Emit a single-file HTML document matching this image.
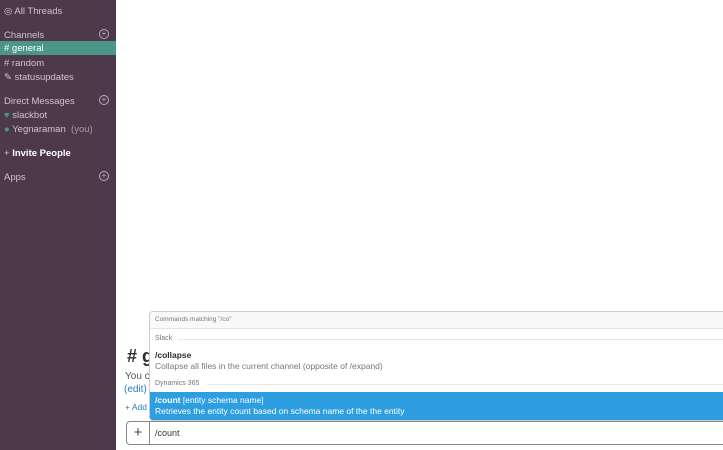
<!DOCTYPE html>
<html><head><style>
body{margin:0;width:723px;height:450px;overflow:hidden;font-family:"Liberation Sans",sans-serif;background:#fff;position:relative}
.sb{position:absolute;left:0;top:0;width:116px;height:450px;background:#4d394b;color:#cfc3cf;font-size:9.5px}
.sb div{position:absolute;left:4px;white-space:nowrap}
.plus{position:absolute;left:99px!important;width:8px;height:8px;border:1px solid #b9aab8;border-radius:50%;font-size:8px;line-height:8px;text-align:center;color:#b9aab8}
.a{position:absolute;white-space:nowrap}
</style></head><body>
<div class="sb">
<div style="top:6px">◎ All Threads</div>
<div style="top:30px">Channels</div><div class="plus" style="top:29px">+</div>
<div style="left:0!important;top:41px;width:116px;height:14px;background:#4c9689"></div>
<div style="top:43px;color:#fff"># general</div>
<div style="top:58px"># random</div>
<div style="top:72px">✎ statusupdates</div>
<div style="top:96px">Direct Messages</div><div class="plus" style="top:95px">+</div>
<div style="top:110px"><span style="color:#4c9689">♥</span> slackbot</div>
<div style="top:124px"><span style="color:#4c9689">●</span> Yegnaraman <span style="color:#a897a6">&nbsp;(you)</span></div>
<div style="top:148px;color:#fff;font-weight:bold"><span style="font-weight:normal;color:#cfc3cf">+</span> Invite People</div>
<div style="top:172px">Apps</div><div class="plus" style="top:171px">+</div>
</div>
<div class="a" style="left:127px;top:346px;font-size:18px;font-weight:bold;color:#2c2d30"># g</div>
<div class="a" style="left:125px;top:371px;font-size:10px;color:#555">You c</div>
<div class="a" style="left:124px;top:384px;font-size:10px;color:#2a80b9">(edit)</div>
<div class="a" style="left:125px;top:402px;font-size:8.5px;color:#2a80b9">+ Add</div>
<div class="a" style="left:149px;top:311px;width:580px;height:110px;border:1px solid #ccc;border-radius:4px;background:#fff;box-sizing:border-box;overflow:hidden">
<div style="height:17px;background:#f9f9f9;border-bottom:1px solid #e4e4e4;font-size:6.5px;color:#777;padding:4px 0 0 5px;box-sizing:border-box">Commands matching "/co"</div>
<div style="position:absolute;left:5px;top:23px;font-size:7px;color:#777">Slack</div>
<div style="position:absolute;left:28px;top:27px;width:560px;border-top:1px solid #e8e8e8"></div>
<div style="position:absolute;left:5px;top:38px;font-size:8.5px;font-weight:bold;color:#2c2d30">/collapse</div>
<div style="position:absolute;left:5px;top:49px;font-size:8.5px;color:#777">Collapse all files in the current channel (opposite of /expand)</div>
<div style="position:absolute;left:5px;top:68px;font-size:7px;color:#777">Dynamics 365</div>
<div style="position:absolute;left:57px;top:72px;width:560px;border-top:1px solid #e8e8e8"></div>
<div style="position:absolute;left:0;top:80px;width:580px;height:28px;background:#2d9ee0;color:#fff;font-size:8.5px">
<div style="position:absolute;left:5px;top:3px"><b>/count</b> [entity schema name]</div>
<div style="position:absolute;left:5px;top:14px">Retrieves the entity count based on schema name of the the entity</div></div>
</div>
<div class="a" style="left:126px;top:421px;width:610px;height:24px;border:1px solid #888;border-radius:4px;box-sizing:border-box">
<div style="position:absolute;left:0;top:0;width:22px;height:22px;border-right:1px solid #888;text-align:center;font-size:15px;line-height:21px;color:#444">+</div>
<div style="position:absolute;left:28px;top:6px;font-size:9px;color:#333">/count</div>
</div>
</body></html>
